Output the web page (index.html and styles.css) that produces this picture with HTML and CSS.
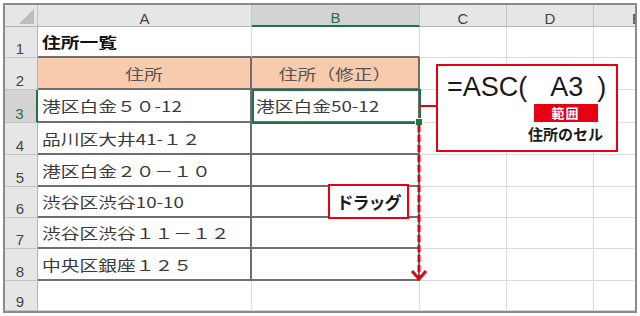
FILE: index.html
```html
<!DOCTYPE html>
<html lang="ja">
<head>
<meta charset="utf-8">
<title>住所一覧</title>
<link rel="stylesheet" href="styles.css">
</head>
<body>
<div class="page">
  <div class="sheet">
    <div class="c hd corner"><span class="tri"></span></div>
    <div class="c hd">A</div>
    <div class="c hd selcol">B</div>
    <div class="c hd">C</div>
    <div class="c hd">D</div>
    <div class="c hd">E</div>

    <div class="c rh">1</div>
    <div class="c above"><span class="t b">住所一覧</span></div>
    <div class="c above"></div>
    <div class="c"></div><div class="c"></div><div class="c"></div>

    <div class="c rh">2</div>
    <div class="c tb peach ctr"><span class="t">住所</span></div>
    <div class="c tb peach ctr"><span class="t">住所（修正）</span></div>
    <div class="c"></div><div class="c"></div><div class="c"></div>

    <div class="c rh selrow">3</div>
    <div class="c tb"><span class="t">港区白金５０-12</span></div>
    <div class="c tb active"><span class="t">港区白金50-12</span></div>
    <div class="c"></div><div class="c"></div><div class="c"></div>

    <div class="c rh">4</div>
    <div class="c tb"><span class="t">品川区大井41-１２</span></div>
    <div class="c tb"></div>
    <div class="c"></div><div class="c"></div><div class="c"></div>

    <div class="c rh">5</div>
    <div class="c tb"><span class="t">港区白金２０－１０</span></div>
    <div class="c tb"></div>
    <div class="c"></div><div class="c"></div><div class="c"></div>

    <div class="c rh">6</div>
    <div class="c tb"><span class="t">渋谷区渋谷10-10</span></div>
    <div class="c tb"></div>
    <div class="c"></div><div class="c"></div><div class="c"></div>

    <div class="c rh">7</div>
    <div class="c tb"><span class="t">渋谷区渋谷１１－１２</span></div>
    <div class="c tb"></div>
    <div class="c"></div><div class="c"></div><div class="c"></div>

    <div class="c rh">8</div>
    <div class="c tb"><span class="t">中央区銀座１２５</span></div>
    <div class="c tb"></div>
    <div class="c"></div><div class="c"></div><div class="c"></div>

    <div class="c rh">9</div>
    <div class="c"></div><div class="c"></div>
    <div class="c"></div><div class="c"></div><div class="c"></div>
  </div>

  <div class="link"></div>
  <div class="callout">
    <div class="formula">=ASC(<span class="arg">A3</span>)</div>
    <div class="note">
      <div class="label">範囲</div>
      <div class="cap">住所のセル</div>
    </div>
  </div>

  <div class="drag">ドラッグ</div>

  <svg class="arrow" width="24" height="162" viewBox="0 0 24 162">
    <line x1="12" y1="3" x2="12" y2="155" stroke="#e60012" stroke-width="3" stroke-dasharray="7 3"/>
    <polyline points="5,149 12,157 19,149" fill="none" stroke="#e60012" stroke-width="3"/>
  </svg>
</div>
</body>
</html>
```
FILE: styles.css
```css
* { box-sizing: border-box; }

body {
  margin: 0;
  background: #fff;
  font-family: "Noto Sans CJK JP", sans-serif;
}

.page {
  position: relative;
  width: 640px;
  height: 316px;
  overflow: hidden;
}

.sheet {
  margin: 3px 0 0 3px;
  width: 634px;
  border: 2px solid #8a8a8a;
  display: grid;
  grid-template-columns: 33px 214px 168px 87px 87px 87px;
  grid-template-rows: 22px 31px 32px 33px 32px 32px 31px 31px 32px 30px;
  overflow: hidden;
}

.c {
  display: flex;
  align-items: center;
  padding-left: 4px;
  border-right: 1px solid #dadada;
  border-bottom: 1px solid #dadada;
  font-size: 15px;
  color: #3a3a3a;
  white-space: nowrap;
  overflow: hidden;
  min-width: 0;
}

.hd {
  background: #e6e6e6;
  border-right-color: #c4c4c4;
  border-bottom-color: #b5b5b5;
  font-family: "Liberation Sans", Arial, sans-serif;
  color: #444;
  justify-content: center;
  align-items: flex-end;
  padding: 0;
  line-height: 1;
}

.rh {
  background: #e6e6e6;
  border-right-color: #b5b5b5;
  border-bottom-color: #c4c4c4;
  font-family: "Liberation Sans", Arial, sans-serif;
  color: #444;
  justify-content: center;
  align-items: flex-end;
  padding: 0 2px 1px 0;
  line-height: 1;
}

.corner {
  justify-content: flex-end;
  align-items: flex-end;
  padding: 0 3px 2px 0;
}

.tri {
  width: 0;
  height: 0;
  border-left: 15px solid transparent;
  border-bottom: 15px solid #bcbcbc;
}

.selcol {
  background: #d3d3d3;
  color: #217346;
  border-bottom: 2px solid #217346;
}

.selrow {
  background: #d3d3d3;
  color: #217346;
  border-right: 2px solid #217346;
}

.t {
  display: inline-block;
  line-height: 1;
  transform: scaleX(1.25);
  transform-origin: 0 50%;
}

.ctr {
  justify-content: center;
  padding-left: 0;
}

.ctr .t {
  transform-origin: 50% 50%;
}

.b {
  font-weight: 700;
  color: #111;
}

.above {
  border-bottom: 2px solid #6e6e6e;
}

.tb {
  border-right: 2px solid #6e6e6e;
  border-bottom: 2px solid #6e6e6e;
}

.peach {
  background: #f8cbad;
  color: #555;
}

.active {
  position: relative;
  overflow: visible;
}

.active::before {
  content: "";
  position: absolute;
  left: 0;
  top: -1px;
  right: -3px;
  bottom: -3px;
  border: 2px solid #217346;
}

.active::after {
  content: "";
  position: absolute;
  right: -5px;
  bottom: -5px;
  width: 6px;
  height: 6px;
  background: #217346;
  border: 1px solid #fff;
}

/* annotations */
.link {
  position: absolute;
  left: 420px;
  top: 105px;
  width: 16px;
  height: 2px;
  background: #e60012;
}

.callout {
  position: absolute;
  left: 436px;
  top: 64px;
  width: 182px;
  height: 88px;
  border: 2px solid #e60012;
  background: #fff;
  padding: 8px 0 0 9px;
}

.formula {
  font-family: "Liberation Sans", Arial, sans-serif;
  font-size: 27px;
  line-height: 27px;
  color: #1a1a1a;
  white-space: nowrap;
}

.arg {
  margin: 0 14px 0 23px;
}

.note {
  display: flex;
  flex-direction: column;
  align-items: center;
  width: 75px;
  margin-left: 81px;
}

.label {
  margin-top: 3px;
  width: 64px;
  height: 18px;
  background: #e60012;
  color: #fff;
  font-weight: 700;
  font-size: 13px;
  line-height: 18px;
  text-align: center;
  letter-spacing: 1px;
}

.cap {
  margin-top: 4px;
  font-size: 15px;
  font-weight: 700;
  line-height: 15px;
  color: #1a1a1a;
  white-space: nowrap;
}

.drag {
  position: absolute;
  left: 328px;
  top: 184px;
  width: 81px;
  height: 35px;
  border: 2px solid #e60012;
  background: #fff;
  display: flex;
  align-items: center;
  justify-content: center;
  font-weight: 700;
  font-size: 17px;
  letter-spacing: -1px;
  color: #1a1a1a;
}

.arrow {
  position: absolute;
  left: 407px;
  top: 122px;
}
```
